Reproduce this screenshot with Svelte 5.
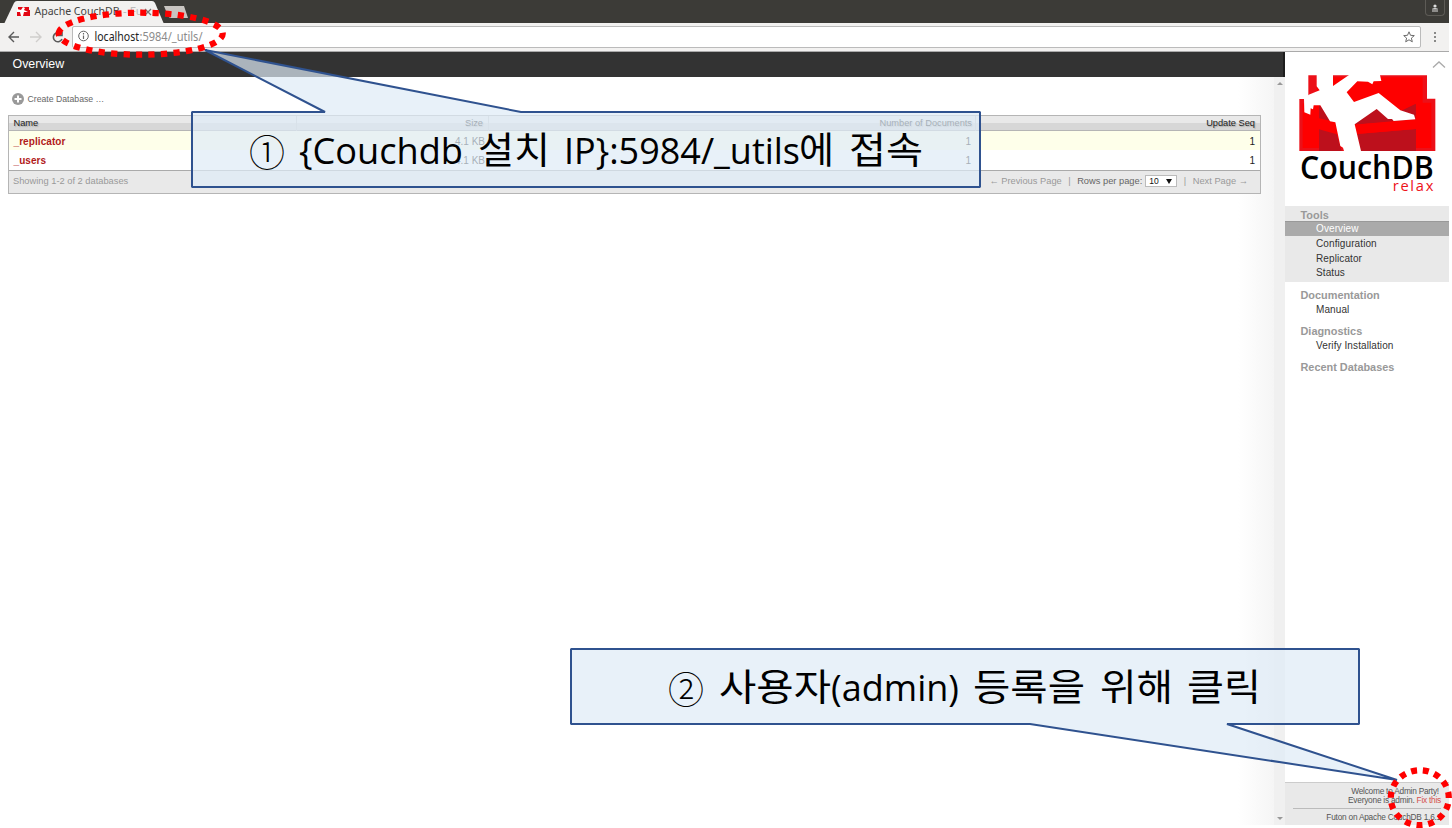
<script>
  const columns = ['Name', 'Size', 'Number of Documents', 'Update Seq'];
  const rows = [
    ['_replicator', '4.1 KB', '1', '1'],
    ['_users', '4.1 KB', '1', '1']
  ];
  const groups = [
    { title: 'Tools', items: ['Overview', 'Configuration', 'Replicator', 'Status'] },
    { title: 'Documentation', items: ['Manual'] },
    { title: 'Diagnostics', items: ['Verify Installation'] },
    { title: 'Recent Databases', items: [] }
  ];
</script>

<div class="screen">
  <header class="tabs">
    <svg width="200" height="24" viewBox="0 0 200 24">
      <path d="M4 24 14 3Q15 1 17 1H152Q154 1 155 3L164 24Z" fill="#f2f1f0" />
      <path d="M164 6H184L188 18H171Q169 18 168 16Z" fill="#c9c5c1" />
      <path d="M18 7h11v3h1v6H17v-6h1z" fill="#e30613" />
      <path d="m17 9 4 1 2-3 2 1-1 2 4 2-4 0-1 4h-2l-1-4-3 0z" fill="#fff" />
      <text x="34.5" y="15" textLength="85" lengthAdjust="spacingAndGlyphs">Apache CouchDB</text>
      <text x="123" y="15" fill="#999" opacity=".6">- Fu</text>
      <path d="m145 9 6 6m0-6-6 6" stroke="#777" stroke-width="1.3" />
    </svg>
    <span class="user">
      <svg width="8" height="8" viewBox="0 0 8 8"><circle cx="4" cy="2" r="1.6" fill="#ddd" /><path d="M1 5.5Q1 4 4 4t3 1.5zM1 6.5h6V7.5H1z" fill="#ddd" /></svg>
    </span>
  </header>

  <div class="toolbar">
    <svg class="nav" width="72" height="27" viewBox="0 0 72 27" fill="none" stroke-width="1.4">
      <path d="M19 13H9.500M14 8l-5 5 5 5" stroke="#5a5a5a" />
      <path d="M30 13h10.500M36 8l5 5-5 5" stroke="#d0cecc" />
      <path d="M61 10a4.500 4.500 0 1 0 1 5M62 8v3.500h-4" stroke="#5a5a5a" stroke-width="1.6" />
    </svg>
    <div class="address">
      <svg width="134" height="22" viewBox="0 0 134 22">
        <circle cx="10.500" cy="10" r="4.800" fill="none" stroke="#666" />
        <path d="M10.500 9.500v3.500M10.500 7v1.400" stroke="#666" stroke-width="1.200" />
        <text x="21.500" y="14.500" textLength="44.500" lengthAdjust="spacingAndGlyphs" fill="#222">localhost</text>
        <text x="66.500" y="14.500" textLength="63" lengthAdjust="spacingAndGlyphs" fill="#8b8b8b">:5984/_utils/</text>
      </svg>
      <svg width="12" height="12" viewBox="0 0 12 12"><path d="m6 .8 1.500 3.500 3.800.3-2.900 2.500.9 3.700L6 8.800l-3.300 2 .9-3.700L.7 4.600l3.800-.3z" fill="none" stroke="#6a6a6a" /></svg>
    </div>
    <span class="menu"><i></i><i></i><i></i></span>
  </div>

  <div class="content">
    <main>
      <h1>Overview</h1>
      <div class="body">
        <section>
          <div class="create">
            <svg width="12" height="12" viewBox="0 0 12 12"><circle cx="6" cy="6" r="6" fill="#999" /><path d="M6 2.500v7M2.500 6h7" stroke="#fff" stroke-width="2" /></svg>
            <span>Create Database …</span>
          </div>
          <div class="table">
            <div class="row head">{#each columns as c}<span>{c}</span>{/each}</div>
            {#each rows as r}
              <div class="row">{#each r as v}<span>{v}</span>{/each}</div>
            {/each}
            <div class="foot">
              <span>Showing 1-2 of 2 databases</span>
              <div class="pager">
                <span>← Previous Page</span><span class="bar">|</span>
                <span class="per">Rows per page:</span>
                <span class="select">10<b></b></span>
                <span class="bar">|</span><span>Next Page →</span>
              </div>
            </div>
          </div>
        </section>
        <div class="scroll"><b class="up"></b><b class="down"></b></div>
      </div>
    </main>

    <aside>
      <svg class="chevron" width="14" height="7" viewBox="0 0 14 7"><path d="m1 6.500 6-5.500 6 5.500" fill="none" stroke="#aaa" stroke-width="1.300" /></svg>
      <svg class="logo" width="137" height="119" viewBox="87 225 411 357">
        <path d="M115 226H471V296H496V453H88V297H115Z" fill="#ec1018" />
        <path d="M140 232H458V308H484V444H98V310H140Z" fill="#fe0000" />
        <path d="M147 314 196 366 147 355ZM147 388l53 15 15 50h-68ZM252 371l68-45 117-14v48l-185 14ZM262 402l176-15v66H272Z" fill="#bd101c" />
        <path d="M305 250H437V312L391 334 326 279 270 300Z" fill="#fe0000" />
        <path d="M400 331 437 312V346Z" fill="#bd101c" />
        <path d="M437 358 250 374l6 28 181-15Z" fill="#fe0000" />
        <path d="M140 225H189V258L237 225H330L334 243 311 244 307 253 294 245 262 244 230 277 252 306 326 279 391 331 432 344 436 358 371 363 366 357 354 357 320 327 254 373 273 453H222L219 443 211 438 196 367 180 364 151 316H131L129 328 122 325 121 344 103 337 102 297 116 284 149 271 140 259Z" fill="#fff" />
        <text class="couch" x="90" y="536" textLength="401" lengthAdjust="spacingAndGlyphs">CouchDB</text>
        <text class="relax" x="368" y="574" textLength="122" lengthAdjust="spacing">relax</text>
      </svg>
      <nav>
        {#each groups as g, i}
          <div class="group" class:active={i === 0}>
            <h2>{g.title}</h2>
            {#each g.items as item}
              <a class:selected={item === 'Overview'}>{item}</a>
            {/each}
          </div>
        {/each}
      </nav>
      <footer>
        <p>Welcome to Admin Party!&nbsp;<br />Everyone is admin. <em>Fix this</em></p>
        <p class="version">Futon on Apache CouchDB 1.6.1</p>
      </footer>
    </aside>
  </div>

  <svg class="notes" width="1452" height="828" viewBox="0 0 1452 828">
    <g fill="#deebf7" fill-opacity=".7" stroke="#2f528f" stroke-width="2" stroke-linejoin="bevel">
      <path d="M192 112H325L205 50 521 112H980V187H192Z" />
      <path d="M571 649H1359V724H1227L1397 780 1030 724H571Z" />
    </g>
    <g fill="none" stroke="#f00" stroke-width="6.250" stroke-dasharray="6.25 6.25">
      <path d="M58.700 33.700A82 21 0 0 1 222.700 33.700A82 21 0 0 1 58.700 33.700" />
      <path d="M1390.800 797.700A29 27.500 0 0 1 1448.800 797.700A29 27.500 0 0 1 1390.800 797.700" stroke-dasharray="6 5.840" />
    </g>
    <g class="note">
      <text x="249" y="167" textLength="36" lengthAdjust="spacingAndGlyphs" class="num">①</text>
      <text x="299" y="164" textLength="164" lengthAdjust="spacingAndGlyphs">&#123;Couchdb</text>
      <text x="478" y="164" textLength="72" lengthAdjust="spacingAndGlyphs">설치</text>
      <text x="564" y="164" textLength="236" lengthAdjust="spacingAndGlyphs">IP&#125;:5984/_utils</text>
      <text x="799" y="164" textLength="35" lengthAdjust="spacingAndGlyphs">에</text>
      <text x="849" y="164" textLength="74" lengthAdjust="spacingAndGlyphs">접속</text>
      <text x="668" y="703.500" textLength="36" lengthAdjust="spacingAndGlyphs" class="num">②</text>
      <text x="719" y="701" textLength="112" lengthAdjust="spacingAndGlyphs">사용자</text>
      <text x="831" y="701" textLength="128" lengthAdjust="spacingAndGlyphs">(admin)</text>
      <text x="973" y="701" textLength="112" lengthAdjust="spacingAndGlyphs">등록을</text>
      <text x="1100" y="701" textLength="73" lengthAdjust="spacingAndGlyphs">위해</text>
      <text x="1187" y="701" textLength="74" lengthAdjust="spacingAndGlyphs">클릭</text>
    </g>
  </svg>
</div>

<style>
  :global(body) { margin: 0; background: #fff; }
  .screen { position: relative; width: 1452px; height: 828px; overflow: hidden; font-family: "Liberation Sans", Arial, sans-serif; }
  .screen * { box-sizing: border-box; }
  svg { display: block; }
  .tabs, .toolbar, .content { width: 1449px; }
  .tabs { height: 23px; background: #3c3b37; display: flex; justify-content: space-between; overflow: hidden; }
  .tabs text, .address text { font: 12px "Noto Sans", sans-serif; }
  .tabs text { font-size: 11.5px; }
  .tabs text:not([fill]) { fill: #444; }
  .user { width: 20px; height: 16px; margin-right: 4px; border: 1px solid #5d5b56; border-top: 0; border-radius: 0 0 4px 4px; display: flex; align-items: center; justify-content: center; }
  .toolbar { height: 29px; background: #f2f1f0; border-bottom: 1px solid #aaa; display: flex; align-items: center; }
  .address { width: 1349px; height: 22px; border: 1px solid #bbb; border-radius: 2px; background: #fff; display: flex; align-items: center; justify-content: space-between; padding-right: 5px; }
  .menu { flex: 1; display: flex; flex-direction: column; align-items: center; gap: 2px; }
  .menu i { width: 2px; height: 2px; border-radius: 1px; background: #666; }
  .content { height: 773px; display: flex; }
  main { width: 1285px; display: flex; flex-direction: column; }
  h1 { margin: 0; height: 25px; background: #333; border-right: 2px solid #1d1d1d; color: #fff; font: 12.4px/25px "Liberation Sans", sans-serif; padding-left: 12.5px; }
  .body { flex: 1; display: flex; }
  section { width: 1274px; padding: 16px 13px 0 8px; background: linear-gradient(to right, #fff 1238px, #f5f5f5); }
  .create { display: flex; gap: 3.500px; padding-left: 4px; height: 22px; font-size: 8.7px; line-height: 13px; color: #666; }
  .table { border: 1px solid #b5b5b5; height: 79px; background: #fff; font-size: 10px; color: #222; }
  .row { display: grid; grid-template-columns: 288px 192px 487px 1fr; height: 19px; line-height: 21px; background: #fff; }
  .row span { text-align: right; padding: 0 5px; }
  .row span:first-child { text-align: left; }
  .row:not(.head) span:first-child { color: #b11a1a; font-weight: bold; letter-spacing: .08px; }
  .row:nth-child(2) { background: #feffea; }
  .row:nth-child(3) { height: 20px; }
  .row:not(.head) span:nth-child(3) { padding-right: 5px; }
  .row:not(.head) span:nth-child(2) { padding-right: 4px; }
  .head { height: 15px; font-size: 9.25px; line-height: 15px; background: linear-gradient(#e9e9e9 0 50%, #d7d7d7 50%); border-bottom: 1px solid #b5b5b5; text-shadow: 1px 1px 1px #aaa; }
  .head span:first-child, .row span:first-child { padding-left: 4.500px; }
  .head span:not(:last-child) { border-right: 1px solid #c8c8c8; }
  .head span:nth-child(3) { padding-right: 3px; }
  .foot { height: 23px; border-top: 1px solid #aaa; background: #e9e9e9; display: flex; align-items: center; justify-content: space-between; padding: 0 12px 2px 4px; font-size: 9.3px; color: #999; }
  .pager { display: flex; align-items: center; gap: 3px; }
  .bar { padding: 0 3.500px; }
  .per { color: #666; }
  .select { width: 32px; height: 12px; background: #fff; border: 1px solid #bbb; color: #111; font-size: 8.5px; display: flex; align-items: center; justify-content: space-between; padding: 0 4px 0 3px; }
  .select b { border: 3px solid transparent; border-top: 5px solid #111; border-bottom: 0; }
  .scroll { width: 11px; background: #f0f0f0; display: flex; flex-direction: column; justify-content: space-between; align-items: center; padding: 5px 0; }
  .up { border: 3px solid transparent; border-bottom-color: #999; border-top: 0; }
  .down { border: 3px solid transparent; border-top-color: #999; border-bottom: 0; }
  aside { width: 164px; background: #fff; display: flex; flex-direction: column; }
  .chevron { align-self: flex-end; margin: 9px 3.500px 0 0; }
  .logo { margin: 7px 0 0 14px; }
  .couch { font: 600 98px "Open Sans", sans-serif; }
  .relax { font: 44px "Open Sans", sans-serif; fill: #ed1018; }
  nav { margin-top: 12px; }
  .group { padding-top: 2px; margin-bottom: 6px; }
  .group:not(.active) { padding-top: 1px; margin-bottom: 7px; }
  .active { background: #e9e9e9; padding-bottom: 2px; }
  h2 { margin: 0; padding-left: 15.500px; font-size: 10.9px; line-height: 13px; color: #999; }
  .active h2 { line-height: 14px; height: 13px; }
  .group a { display: block; height: 14.800px; padding-left: 31px; font-size: 10px; line-height: 15.500px; color: #333; letter-spacing: .1px; }
  .group .selected { background: #aaa; color: #fff; border-top: 1px solid #999; line-height: 14.500px; }
  footer { margin-top: auto; height: 43px; background: #e9e9e9; border-top: 1px solid #ccc; padding: 4px 8px 0; font-size: 8.300px; line-height: 9px; color: #555; text-align: right; letter-spacing: -.23px; }
  footer p { margin: 0; white-space: nowrap; }
  footer em { font-style: normal; color: #d4504c; }
  .version { margin-top: 3px; padding-top: 4px; border-top: 1px solid #bbb; }
  .notes { position: absolute; left: 0; top: 0; }
  .note text { font: 37px "Open Sans", "Noto Sans CJK KR", sans-serif; fill: #000; }
  .note .num { font-family: "Noto Sans CJK KR", sans-serif; font-weight: 300; }
</style>
